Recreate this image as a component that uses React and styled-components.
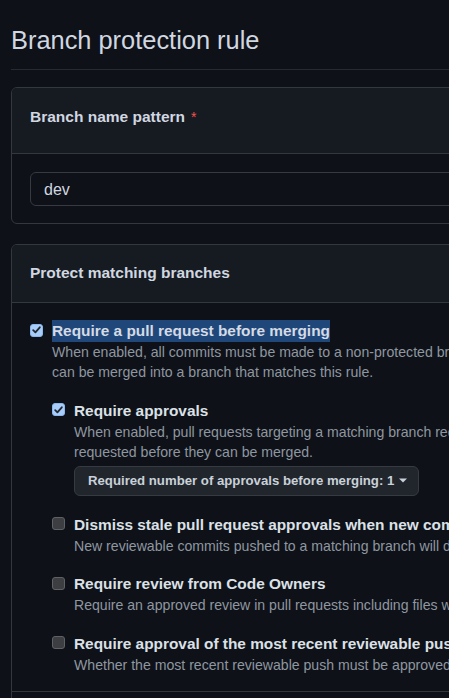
import React from "react";
import styled, { createGlobalStyle } from "styled-components";

const GlobalStyle = createGlobalStyle`
  html, body {
    margin: 0;
    padding: 0;
    background: #0e1117;
    overflow: hidden;
  }
  body {
    font-family: "Liberation Sans", Arial, sans-serif;
    color: #d1d7e0;
  }
`;

const Page = styled.main`
  width: 900px;
  padding-left: 11px;
  box-sizing: border-box;
`;

const TitleBar = styled.div`
  padding: 24px 0 13px 0;
  border-bottom: 1px solid #262b32;
`;

const Title = styled.h1`
  margin: 0;
  font-size: 25.4px;
  line-height: 32px;
  font-weight: 400;
  color: #d1d7e0;
`;

const Box = styled.section`
  margin-top: ${(p) => p.$mt}px;
  border: 1px solid #33383f;
  border-radius: 6px;
  background: #0e1117;
  overflow: hidden;
`;

const BoxHeader = styled.div`
  background: #161b22;
  border-bottom: 1px solid #33383f;
  padding: ${(p) => p.$pt}px 18px ${(p) => p.$pb}px 18px;
`;

const BoxTitle = styled.h2`
  margin: 0;
  font-size: 15.5px;
  line-height: 20px;
  font-weight: 700;
  color: #d1d7e0;
`;

const Required = styled.span`
  color: #f85149;
  font-weight: 400;
  font-size: 14px;
  margin-left: 6px;
`;

const BoxBody = styled.div`
  padding: ${(p) => p.$pt}px 18px ${(p) => p.$pb}px 18px;
`;

const TextInput = styled.div`
  height: 34px;
  box-sizing: border-box;
  border: 1px solid #363b42;
  border-radius: 6px;
  background: #0e1117;
  display: flex;
  align-items: center;
  padding: 1px 0 0 13px;
  font-size: 16px;
  color: #d1d7e0;
`;

const Option = styled.div`
  display: flex;
  align-items: flex-start;
  margin-top: ${(p) => p.$mt || 0}px;
`;

const CheckBox = styled.span`
  flex: none;
  width: 13px;
  height: 13px;
  box-sizing: border-box;
  margin-top: 3.5px;
  margin-right: 9px;
  border-radius: 3px;
  border: 1px solid ${(p) => (p.$checked ? "#8cb7ec" : "#5f6166")};
  background: ${(p) => (p.$checked ? "#a6cdfb" : "#3c3e42")};
  display: flex;
  align-items: center;
  justify-content: center;
`;

const OptionContent = styled.div`
  flex: 1;
  min-width: 0;
`;

const Label = styled.div`
  font-size: 15.4px;
  line-height: 22px;
  font-weight: 700;
  color: #dce1e7;
  white-space: nowrap;
`;

const Selected = styled.span`
  display: inline-block;
  background: #20477a;
  color: #d4dbe4;
`;

const Note = styled.p`
  margin: 0;
  font-size: 14.1px;
  line-height: 20px;
  color: #8e97a1;
  white-space: nowrap;
`;

const Nested = styled.div`
  margin-top: 17.5px;
`;

const Dropdown = styled.button`
  margin-top: 4px;
  height: 30px;
  box-sizing: border-box;
  display: inline-flex;
  align-items: center;
  gap: 5px;
  padding: 0 11px 0 13px;
  border: 1px solid #363b42;
  border-radius: 6px;
  background: #21262d;
  color: #c9d1d9;
  font-family: "Liberation Sans", Arial, sans-serif;
  font-size: 13.2px;
  font-weight: 700;
  cursor: pointer;
`;

const Divider = styled.div`
  border-top: 1px solid #33383f;
  height: 60px;
`;

function Check({ checked }) {
  return (
    <CheckBox $checked={checked}>
      {checked && (
        <svg width="9" height="8" viewBox="0 0 9 8" aria-hidden="true">
          <path
            d="M1.2 4.2 L3.4 6.4 L7.8 1.3"
            fill="none"
            stroke="#25282d"
            strokeWidth="1.8"
            strokeLinecap="round"
            strokeLinejoin="round"
          />
        </svg>
      )}
    </CheckBox>
  );
}

function Caret() {
  return (
    <svg width="8" height="5" viewBox="0 0 8 5" aria-hidden="true">
      <path d="M0 0.5 L8 0.5 L4 4.5 Z" fill="#c9d1d9" />
    </svg>
  );
}

function Setting({ checked, label, lines, mt, selected, children }) {
  return (
    <Option $mt={mt}>
      <Check checked={checked} />
      <OptionContent>
        <Label>{selected ? <Selected>{label}</Selected> : label}</Label>
        {lines.map((l, i) => (
          <Note key={i}>{l}</Note>
        ))}
        {children}
      </OptionContent>
    </Option>
  );
}

export default function App() {
  return (
    <>
      <GlobalStyle />
      <Page>
        <TitleBar>
          <Title>Branch protection rule</Title>
        </TitleBar>

        <Box $mt={17}>
          <BoxHeader $pt={19} $pb={26}>
            <BoxTitle>
              Branch name pattern<Required>*</Required>
            </BoxTitle>
          </BoxHeader>
          <BoxBody $pt={18} $pb={17}>
            <TextInput>dev</TextInput>
          </BoxBody>
        </Box>

        <Box $mt={20}>
          <BoxHeader $pt={18} $pb={19}>
            <BoxTitle>Protect matching branches</BoxTitle>
          </BoxHeader>
          <BoxBody $pt={17} $pb={16.5}>
            <Setting
              checked
              selected
              label="Require a pull request before merging"
              lines={[
                "When enabled, all commits must be made to a non-protected branch and submitted via a pull request before they",
                "can be merged into a branch that matches this rule.",
              ]}
            >
              <Nested>
                <Setting
                  checked
                  label="Require approvals"
                  lines={[
                    "When enabled, pull requests targeting a matching branch require a number of approvals and no changes",
                    "requested before they can be merged.",
                  ]}
                >
                  <Dropdown type="button">
                    Required number of approvals before merging: 1
                    <Caret />
                  </Dropdown>
                </Setting>
                <Setting
                  mt={18}
                  label="Dismiss stale pull request approvals when new commits are pushed"
                  lines={[
                    "New reviewable commits pushed to a matching branch will dismiss pull request review approvals.",
                  ]}
                />
                <Setting
                  mt={17.5}
                  label="Require review from Code Owners"
                  lines={[
                    "Require an approved review in pull requests including files with a designated code owner.",
                  ]}
                />
                <Setting
                  mt={17.5}
                  label="Require approval of the most recent reviewable push"
                  lines={[
                    "Whether the most recent reviewable push must be approved by someone other than the person who pushed it.",
                  ]}
                />
              </Nested>
            </Setting>
          </BoxBody>
          <Divider />
        </Box>
      </Page>
    </>
  );
}
